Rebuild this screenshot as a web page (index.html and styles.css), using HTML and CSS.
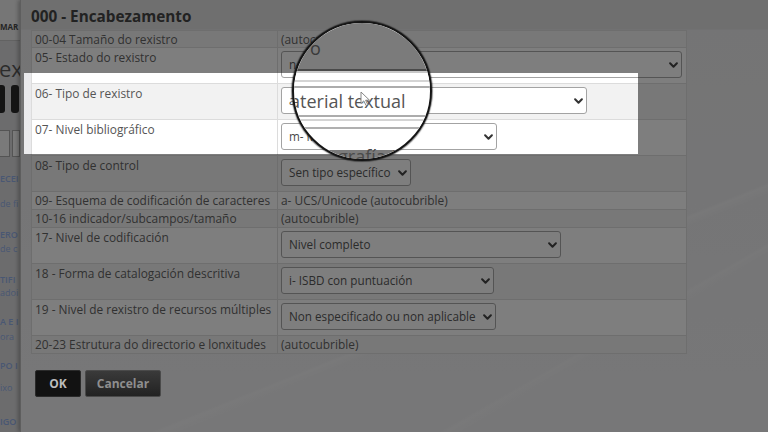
FILE: index.html
```html
<!DOCTYPE html>
<html lang="gl">
<head>
<meta charset="utf-8">
<title>000 - Encabezamento</title>
<link rel="stylesheet" href="styles.css">
</head>
<body>
<div class="screen">
  <aside class="under">
    <div class="u-top">MAR</div>
    <div class="u-title">ex</div>
    <div class="u-blocks"><span></span><span></span></div>
    <div class="u-tabs"><span></span><span></span></div>
    <ul class="u-links">
      <li class="cap">ECEI</li>
      <li class="g12">de fi</li>
      <li class="cap g18">ERO</li>
      <li class="g1">de c</li>
      <li class="cap g18">TIFI</li>
      <li>adoi</li>
      <li class="cap g16">A E I</li>
      <li class="g2">ora</li>
      <li class="cap g16">PO I</li>
      <li class="g9">ixo</li>
      <li class="cap g21">IGO</li>
    </ul>
  </aside>

  <main class="modal">
    <h1 class="title">000 - Encabezamento</h1>
    <div class="tbl">
      <div class="tr s first alt"><div class="k">00-04 Tamaño do rexistro</div><div class="v">(autocubrible)</div></div>
      <div class="tr l"><div class="k">05- Estado do rexistro</div><div class="v"><div class="sel w401"><span>n- Novo</span><svg viewBox="0 0 8 5"><path d="M1 1l3 3 3-3"/></svg></div></div></div>
      <div class="tr l alt"><div class="k">06- Tipo de rexistro</div><div class="v"><div class="sel w306"><span>a- Material textual</span><svg viewBox="0 0 8 5"><path d="M1 1l3 3 3-3"/></svg></div></div></div>
      <div class="tr l"><div class="k">07- Nivel bibliográfico</div><div class="v"><div class="sel w216"><span>m- Monografía (ítem)</span><svg viewBox="0 0 8 5"><path d="M1 1l3 3 3-3"/></svg></div></div></div>
      <div class="tr l alt"><div class="k">08- Tipo de control</div><div class="v"><div class="sel w130"><span>Sen tipo específico</span><svg viewBox="0 0 8 5"><path d="M1 1l3 3 3-3"/></svg></div></div></div>
      <div class="tr s"><div class="k">09- Esquema de codificación de caracteres</div><div class="v">a- UCS/Unicode (autocubrible)</div></div>
      <div class="tr s alt"><div class="k">10-16 indicador/subcampos/tamaño</div><div class="v">(autocubrible)</div></div>
      <div class="tr l"><div class="k">17- Nivel de codificación</div><div class="v"><div class="sel w280"><span>Nivel completo</span><svg viewBox="0 0 8 5"><path d="M1 1l3 3 3-3"/></svg></div></div></div>
      <div class="tr l alt"><div class="k">18 - Forma de catalogación descritiva</div><div class="v"><div class="sel w213"><span>i- ISBD con puntuación</span><svg viewBox="0 0 8 5"><path d="M1 1l3 3 3-3"/></svg></div></div></div>
      <div class="tr l"><div class="k">19 - Nivel de rexistro de recursos múltiples</div><div class="v"><div class="sel w215"><span>Non especificado ou non aplicable</span><svg viewBox="0 0 8 5"><path d="M1 1l3 3 3-3"/></svg></div></div></div>
      <div class="tr s alt"><div class="k">20-23 Estrutura do directorio e lonxitudes</div><div class="v">(autocubrible)</div></div>
    </div>
    <div class="actions">
      <button class="btn ok" type="button">OK</button>
      <button class="btn cancel" type="button">Cancelar</button>
    </div>
  </main>

  <div class="spot"></div>

  <div class="lens">
    <div class="m-top"><span class="m-o">o</span></div>
    <div class="m-dark"></div>
    <div class="m-light"></div>
    <div class="m-white h7"></div>
    <div class="m-line"></div>
    <div class="m-white h4"></div>
    <div class="m-sel">aterial textual</div>
    <div class="m-white h2"></div>
    <div class="m-line"></div>
    <div class="m-white h6"></div>
    <div class="m-sel2"></div>
    <div class="m-low">grafía (</div>
    <div class="m-bottom"></div>
    <svg class="cursor" viewBox="0 0 11 15"><path d="M1 1v11.5l2.8-2.6 2.3 4.6 1.7-.8-2.2-4.5H9.5z"/></svg>
  </div>
</div>
</body>
</html>
```
FILE: styles.css
```css
* { box-sizing: border-box; }
html, body { margin: 0; padding: 0; }
body {
  width: 768px;
  height: 432px;
  overflow: hidden;
  font-family: "Open Sans", "DejaVu Sans", sans-serif;
  background: #dadada;
}
.screen {
  position: relative;
  display: flex;
  width: 768px;
  height: 432px;
  overflow: hidden;
}

/* page underneath the dialog (left strip) */
.under {
  width: 20px;
  flex: none;
  overflow: hidden;
  background: #d8d8da;
  white-space: nowrap;
}
.u-top {
  height: 41px;
  background: #eeeeee;
  border-bottom: 1px solid #c0c0c0;
  padding-top: 22px;
  font-size: 8px;
  line-height: 10px;
  font-weight: 700;
  color: #3a3a3a;
}
.u-title {
  margin: 14px 0 0 -1px;
  font-size: 22px;
  line-height: 26px;
  color: #4a4a4a;
}
.u-blocks { margin-top: 4px; height: 28px; display: flex; gap: 6px; }
.u-blocks span { width: 5px; background: #161616; border-radius: 0 3px 3px 0; }
.u-blocks span + span { width: 8px; border-radius: 3px; }
.u-tabs { margin-top: 17px; height: 27px; display: flex; gap: 2px; }
.u-tabs span { width: 12px; background: #f6f6f6; border: 1px solid #a2a2a2; border-left: 0; }
.u-tabs span + span { width: 10px; border-left: 1px solid #a2a2a2; }
.u-links {
  margin: 15px 0 0;
  padding: 0;
  list-style: none;
  font-size: 9px;
  line-height: 13px;
  color: #8aa8e6;
}
.u-links .cap { font-weight: 600; }
.g1 { margin-top: 1px; }
.g2 { margin-top: 2px; }
.g9 { margin-top: 9px; }
.g12 { margin-top: 12px; }
.g16 { margin-top: 16px; }
.g18 { margin-top: 18px; }
.g21 { margin-top: 21px; }

/* dialog */
.modal {
  flex: 1;
  position: relative;
  padding: 6px 0 0 10px;
  border-left: 1px solid #b8b8b8;
  box-shadow: -2px 0 4px rgba(0, 0, 0, 0.3);
  background:
    linear-gradient(158deg, transparent 66%, rgba(255,255,255,0.3) 66.4%, transparent 67.6%),
    linear-gradient(150deg, transparent 78%, rgba(255,255,255,0.25) 78.4%, transparent 79.5%),
    linear-gradient(180deg, #dddddd 0, #dddddd 29px, #e9e9eb 30px, #f0f0f2 100%);
}
.title {
  margin: 0;
  height: 24px;
  font-size: 15.3px;
  line-height: 20px;
  font-weight: 700;
  color: #333;
}
.tbl {
  width: 656px;
  border: 1px solid #dcdcdc;
  border-bottom: 0;
  background: #fff;
  font-size: 11.9px;
  color: #555;
}
.tr {
  display: flex;
  border-bottom: 1px solid #dcdcdc;
  background: #fff;
}
.tr.alt { background: #f2f2f2; }
.tr.s { height: 18px; }
.tr.first { height: 17px; }
.tr.l { height: 36px; }
.k {
  width: 246px;
  flex: none;
  padding: 1px 3px 0;
  border-right: 1px solid #dcdcdc;
  line-height: 15px;
  white-space: nowrap;
}
.tr.l .k { padding-top: 2px; }
.v {
  flex: 1;
  padding: 1px 3px 0;
  line-height: 15px;
  white-space: nowrap;
}
.tr.l .v { padding-top: 3px; }
.sel {
  display: flex;
  align-items: center;
  justify-content: space-between;
  height: 27px;
  padding: 0 3px 0 7px;
  border: 1px solid #a3a3a3;
  border-radius: 3px;
  background: #fff;
  font-size: 11.7px;
  color: #484848;
}
.sel svg { width: 9px; height: 6px; flex: none; }
.sel path { fill: none; stroke: #333; stroke-width: 1.8; stroke-linecap: round; stroke-linejoin: round; }
.w401 { width: 401px; }
.w306 { width: 306px; }
.w216 { width: 216px; }
.w130 { width: 130px; }
.w280 { width: 280px; }
.w213 { width: 213px; }
.w215 { width: 215px; }

.actions {
  position: relative;
  z-index: 2;
  display: flex;
  gap: 4px;
  margin: 16px 0 0 4px;
}
.btn {
  height: 27px;
  border-radius: 2px;
  font-family: "Open Sans", "DejaVu Sans", sans-serif;
  font-size: 12px;
  font-weight: 700;
  padding: 0;
}
.btn.ok {
  width: 46px;
  background: #121212;
  border: 1px solid #2a2a2a;
  color: #bcbcbc;
}
.btn.cancel {
  width: 76px;
  background: linear-gradient(#3a3a3a, #222);
  border: 1px solid #4a4a4a;
  color: #8e8e8e;
}

/* spotlight band */
.spot {
  position: absolute;
  left: 24px;
  top: 73px;
  width: 614px;
  height: 81px;
  z-index: 1;
  pointer-events: none;
  box-shadow: 0 0 0 1000px rgba(20, 20, 20, 0.55);
}

/* magnifier */
.lens {
  position: absolute;
  left: 292px;
  top: 21px;
  width: 140px;
  height: 140px;
  z-index: 3;
  border: 2.5px solid #151515;
  border-radius: 50%;
  overflow: hidden;
  background: #fff;
  box-shadow: 0 0 1px 1px rgba(0, 0, 0, 0.45);
  font-size: 18px;
  white-space: nowrap;
}
.m-top { height: 46px; background: #7b7b7b; padding: 15px 0 0 16px; line-height: 20px; color: #3a3a3a; }
.m-dark { height: 2px; background: #4a4a4a; }
.m-light { height: 2px; background: #c8c8c8; }
.m-white { background: #fff; }
.h2 { height: 2px; }
.h4 { height: 4px; }
.h6 { height: 6px; }
.h7 { height: 7px; }
.m-line { height: 2px; background: #d4d4d4; }
.m-sel {
  height: 31px;
  border-top: 2px solid #acacac;
  border-bottom: 2px solid #acacac;
  margin-left: -4px;
  line-height: 27px;
  color: #555;
}
.m-sel2 { height: 2px; background: #b0b0b0; }
.m-low {
  height: 21px;
  padding: 17px 0 0 44px;
  line-height: 20px;
  color: #4a4a4a;
}
.m-bottom { height: 14px; background: #7b7b7b; }
.cursor {
  position: absolute;
  left: 66px;
  top: 68px;
  width: 11px;
  height: 15px;
}
.cursor path { fill: #fff; stroke: #7a7a7a; stroke-width: 0.9; stroke-linejoin: round; }
```
